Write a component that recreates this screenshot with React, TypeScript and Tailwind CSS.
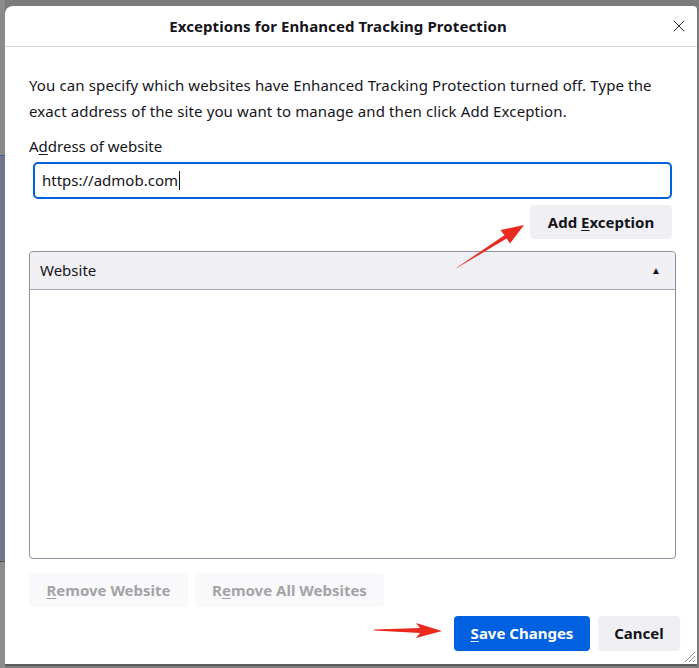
import { X } from "lucide-react";

const font = { fontFamily: '"Noto Sans", "Open Sans", Arial, sans-serif' };

export default function App() {
  return (
    <div
      className="relative h-[668px] w-[699px] overflow-hidden bg-[#7b7b7b] text-[#15141a]"
      style={font}
    >
      <Backdrop />

      <div className="absolute left-[5px] top-[6px] flex h-[660px] w-[692px] flex-col rounded-tl-[8px] rounded-tr-[4px] border-b-2 border-[#5b5b5b] bg-white">
        <header className="flex h-[41px] shrink-0 items-center border-b border-[#d7d7db] pl-[4px] pr-[6px]">
          <h1 className="flex-1 text-center text-[15px] font-bold tracking-[0.1px]">
            Exceptions for Enhanced Tracking Protection
          </h1>
          <button className="flex h-[24px] w-[24px] items-center justify-center text-[#2b2a33]">
            <X size={20} strokeWidth={1.2} />
          </button>
        </header>

        <div className="flex flex-1 flex-col px-[24px]">
          <p className="mt-[25px] text-[15px] leading-[26px] tracking-[0.12px]">
            You can specify which websites have Enhanced Tracking Protection
            turned off. Type the exact address of the site you want to manage
            and then click Add Exception.
          </p>

          <label className="mt-[12px] text-[15px] leading-[20px]">
            A<span className="underline underline-offset-2">d</span>dress of
            website
          </label>

          <div className="ml-[4px] mt-[6px] flex h-[37px] w-[639px] items-center rounded-[5px] border-2 border-[#0061e0] px-[7px] text-[15px]">
            https://admob.com
            <span className="ml-px h-[19px] w-px bg-[#15141a]" />
          </div>

          <div className="mt-[6px] flex w-[643px] justify-end">
            <button className="h-[34px] w-[142px] rounded-[4px] bg-[#f0f0f4] text-[15px] font-bold">
              Add <span className="underline underline-offset-2">E</span>
              xception
            </button>
          </div>

          <div className="mt-[12px] flex h-[308px] w-[647px] flex-col rounded-[4px] border border-[#8f8f9d]">
            <div className="flex h-[38px] items-center justify-between rounded-t-[4px] border-b border-[#a8a8b0] bg-[#f0f0f4] pl-[10px] pr-[14px] text-[15px]">
              <span>Website</span>
              <span className="text-[10px] text-[#15141a]">▲</span>
            </div>
            <div className="flex-1" />
          </div>

          <div className="mt-[14px] flex gap-[7px]">
            <button className="h-[34px] w-[159px] rounded-[4px] bg-[#f9f9fb] text-[15px] font-bold text-[#a3a3a6]">
              <span className="underline underline-offset-2">R</span>emove
              Website
            </button>
            <button className="h-[34px] w-[189px] rounded-[4px] bg-[#f9f9fb] text-[15px] font-bold text-[#a3a3a6]">
              R<span className="underline underline-offset-2">e</span>move All
              Websites
            </button>
          </div>

          <div className="mt-[9px] flex justify-end gap-[8px]">
            <button className="h-[35px] w-[136px] rounded-[4px] bg-[#0061e0] text-[15px] font-bold text-white">
              <span className="underline underline-offset-2">S</span>ave
              Changes
            </button>
            <button className="-mr-[7px] h-[35px] w-[82px] rounded-[4px] bg-[#f0f0f4] text-[15px] font-bold">
              Cancel
            </button>
          </div>
        </div>

        <ResizeGrip />
      </div>

      <Arrows />
    </div>
  );
}

function Backdrop() {
  return (
    <div className="absolute left-0 top-0 flex h-full w-[5px] flex-col">
      <div className="h-[155px] bg-[#8a8a8a]" />
      <div className="h-px bg-[#3b5f9a]" />
      <div className="h-[405px] bg-[#6f7788]" />
      <div className="h-px bg-[#5d4a4a]" />
      <div className="flex-1 bg-[#8c8c8c]" />
    </div>
  );
}

function ResizeGrip() {
  return (
    <svg
      className="absolute bottom-[1px] right-[1px]"
      width="14"
      height="14"
      viewBox="0 0 14 14"
    >
      <path
        d="M13 3 L3 13 M13 7 L7 13 M13 11 L11 13"
        stroke="#8f8f9d"
        strokeWidth="1"
        fill="none"
      />
    </svg>
  );
}

function Arrows() {
  return (
    <svg
      className="pointer-events-none absolute left-0 top-0"
      width="699"
      height="668"
      viewBox="0 0 699 668"
    >
      <polygon
        points="456,268.5 506.6,238.6 510,243.5 524,225 500.5,230 504.4,235.2 457,267.5"
        fill="#ea2a1f"
      />
      <polygon
        points="374,629.5 420,628 416,623 442,631 416,638 420,633 374,630.5"
        fill="#ea2a1f"
      />
    </svg>
  );
}
